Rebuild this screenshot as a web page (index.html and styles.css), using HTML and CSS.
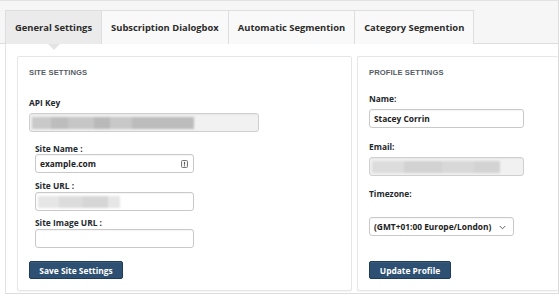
FILE: index.html
```html
<!DOCTYPE html>
<html>
<head>
<meta charset="utf-8">
<link rel="stylesheet" href="styles.css">
</head>
<body>
<div class="wrap">
  <nav class="tabs">
    <div class="tab active">General Settings</div>
    <div class="tab">Subscription Dialogbox</div>
    <div class="tab">Automatic Segmention</div>
    <div class="tab">Category Segmention</div>
  </nav>
  <div class="panel">
    <section class="card site">
      <h3 class="card-title">SITE SETTINGS</h3>
      <label class="lbl api-lbl">API Key</label>
      <div class="input wide disabled"><span class="blur blur-api"></span></div>
      <div class="sub">
        <label class="lbl sn-lbl">Site Name :</label>
        <div class="input narrow"><span class="val">example.com</span>
          <svg class="pm" width="7" height="8" viewBox="0 0 7 8"><rect x="0.5" y="0.5" width="6" height="7" rx="1" fill="#f3f3f3" stroke="#777"/><rect x="3" y="2" width="1" height="2.6" fill="#555"/><rect x="3" y="5.3" width="1" height="1" fill="#555"/></svg>
        </div>
        <label class="lbl su-lbl">Site URL :</label>
        <div class="input narrow"><span class="blur blur-url"></span></div>
        <label class="lbl si-lbl">Site Image URL :</label>
        <div class="input narrow"></div>
      </div>
      <button class="btn btn-save">Save Site Settings</button>
    </section>
    <section class="card profile">
      <h3 class="card-title">PROFILE SETTINGS</h3>
      <label class="lbl name-lbl">Name:</label>
      <div class="input prof"><span class="val">Stacey Corrin</span></div>
      <label class="lbl email-lbl">Email:</label>
      <div class="input prof disabled"><span class="blur blur-email"></span></div>
      <label class="lbl tz-lbl">Timezone:</label>
      <div class="input select"><span class="val">(GMT+01:00 Europe/London)</span>
        <svg class="chev" width="7" height="5" viewBox="0 0 7 5"><path d="M0.8 1 L3.5 3.8 L6.2 1" fill="none" stroke="#666" stroke-width="1"/></svg>
      </div>
      <button class="btn btn-upd">Update Profile</button>
    </section>
  </div>
</div>
</body>
</html>
```

FILE: styles.css
```css
* { box-sizing: border-box; }
html, body { margin: 0; padding: 0; }
body {
  width: 559px;
  height: 297px;
  overflow: hidden;
  background: #ffffff;
  font-family: "Open Sans", "Liberation Sans", sans-serif;
  color: #23282d;
}
.wrap { width: 559px; }
.tabs {
  display: flex;
  height: 44px;
  padding: 10px 0 0 5px;
  background: #f6f6f6;
  border-top: 1px solid #e3e3e3;
  border-right: 1px solid #dcdcdc;
  border-bottom: 1px solid #dddddd;
  width: 559px;
}
.tab {
  position: relative;
  height: 34px;
  margin-top: -1px;
  padding: 0 9px;
  display: flex;
  align-items: center;
  font-size: 9.4px;
  font-weight: 700;
  color: #2b2b2b;
  background: #f9f9f9;
  border: 1px solid #dedede;
  border-left: none;
  border-bottom: none;
}
.tab:first-child { border-left: 1px solid #dedede; }
.tab.active { background: #ebebeb; }
.tab.active::after {
  content: "";
  position: absolute;
  left: 42px;
  bottom: -6px;
  width: 0; height: 0;
  border-left: 6px solid transparent;
  border-right: 6px solid transparent;
  border-top: 6px solid #e4e4e4;
}
.panel {
  display: flex;
  gap: 5px;
  margin-left: 5px;
  width: 554px;
  padding: 12px 0 2px 11px;
  border-left: 1px solid #e2e2e2;
  border-right: 1px solid #dcdcdc;
  border-bottom: 1px solid #dddddd;
  background: #fff;
  height: 250px;
}
.card {
  border: 1px solid #e6e6e6;
  border-radius: 2px;
  background: #fff;
  box-shadow: 0 1px 1px rgba(0,0,0,0.04);
  padding: 10px 0 0 11px;
}
.card.site { width: 335px; }
.card.profile { flex: 1; border-right: none; }
.card-title {
  margin: 0;
  font-family: "Liberation Sans", Arial, sans-serif;
  font-size: 7.6px;
  font-weight: 700;
  line-height: 12px;
  color: #555d66;
  letter-spacing: 0.1px;
}
.lbl {
  display: block;
  font-size: 8.4px;
  font-weight: 700;
  line-height: 10px;
  color: #23282d;
}
.input {
  position: relative;
  height: 19px;
  border: 1px solid #c9c9c9;
  border-radius: 3px;
  background: #fff;
  display: flex;
  align-items: center;
  padding-left: 4px;
  box-shadow: inset 0 1px 1px rgba(0,0,0,0.04);
}
.input.disabled { background: #f1f1f1; border-color: #cfcfcf; }
.val { font-size: 8.4px; font-weight: 700; color: #222; }
.wide { width: 230px; margin-top: 5px; padding-left: 2px; }
.api-lbl { margin-top: 19px; }
.sub { padding-left: 6px; }
.sn-lbl { margin-top: 12px; }
.narrow { width: 159px; }
.su-lbl { margin-top: 8px; margin-bottom: 1px; }
.si-lbl { margin-top: 7px; margin-bottom: 1px; }
.blur { display: block; height: 12px; filter: blur(0.8px); }
.blur-api {
  width: 162px;
  background: linear-gradient(90deg, #c9c9c9 0 12%, #bdbdbd 12% 22%, #c6c6c6 22% 38%, #b9b9b9 38% 48%, #c8c8c8 48% 62%, #bcbcbc 62% 100%);
}
.blur-url {
  width: 82px;
  margin-left: -2px;
  background: linear-gradient(90deg, #e6e6e6 0 25%, #dcdcdc 25% 55%, #d6d6d6 55% 85%, #e6e6e6 85% 100%);
}
.blur-email {
  width: 128px;
  margin-left: -2px;
  background: linear-gradient(90deg, #dcdcdc 0 25%, #d2d2d2 25% 55%, #d8d8d8 55% 80%, #d3d3d3 80% 100%);
}
.pm { position: absolute; right: 5px; top: 5px; }
.btn {
  display: block;
  height: 18px;
  border: 1px solid #1d3b5a;
  border-radius: 2px;
  background: #2d5073;
  color: #fff;
  font-family: "Open Sans", "Liberation Sans", sans-serif;
  font-size: 8.4px;
  font-weight: 700;
  padding: 0 9px;
  box-shadow: inset 0 1px 0 rgba(255,255,255,0.08);
}
.btn-save { width: 94px; margin-top: 13px; }
.btn-upd { width: 82px; margin-top: 25px; }
.name-lbl { margin-top: 15px; }
.prof { width: 155px; margin-top: 5px; }
.email-lbl { margin-top: 14px; }
.tz-lbl { margin-top: 13px; }
.select { width: 145px; margin-top: 18px; }
.chev { position: absolute; right: 7px; top: 7px; }
```
